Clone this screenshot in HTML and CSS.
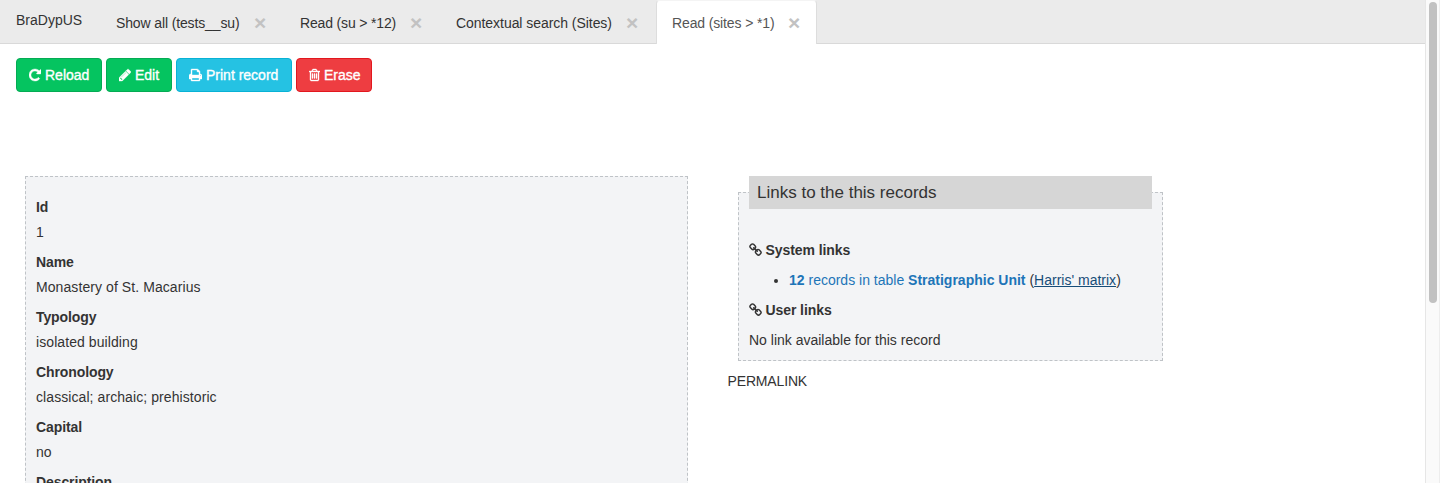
FILE: index.html
```
<!DOCTYPE html>
<html lang="en">
<head>
<meta charset="utf-8">
<title>BraDypUS</title>
<link rel="stylesheet" href="styles.css">
</head>
<body>
<svg class="defs" width="0" height="0">
  <symbol id="link" viewBox="64 0 1664 1792"><path d="M1520 1216q0-40-28-68l-208-208q-28-28-68-28-42 0-72 32 3 3 19 18.500t21.500 21.500 15 19 13 25.500 3.500 27.500q0 40-28 68t-68 28q-15 0-27.500-3.500t-25.500-13-19-15-21.500-21.500-18.500-19q-33 31-33 73 0 40 28 68l206 207q27 27 68 27 40 0 68-26l147-146q28-28 28-67zm-703-705q0-40-28-68l-206-207q-28-28-68-28-39 0-68 27l-147 146q-28 28-28 67 0 40 28 68l208 208q27 27 68 27 42 0 72-31-3-3-19-18.500t-21.500-21.500-15-19-13-25.500-3.500-27.500q0-40 28-68t68-28q15 0 27.500 3.500t25.500 13 19 15 21.500 21.500 18.500 19q33-31 33-73zm895 705q0 120-85 203l-147 146q-83 83-203 83-121 0-204-85l-206-207q-83-83-83-203 0-123 88-209l-88-88q-86 88-208 88-120 0-204-84l-208-208q-84-84-84-204t85-203l147-146q83-83 203-83 121 0 204 85l206 207q83 83 83 203 0 123-88 209l88 88q86-88 208-88 120 0 204 84l208 208q84 84 84 204z"/></symbol>
</svg>
<div class="app">
  <div class="view">
    <nav class="tabs">
      <span class="brand">BraDypUS</span>
      <span class="tab tab-all"><span class="t-all">Show all (tests__su)</span><b class="close">×</b></span>
      <span class="tab tab-su"><span class="t-su">Read (su &gt; *12)</span><b class="close">×</b></span>
      <span class="tab tab-search"><span class="t-search">Contextual search (Sites)</span><b class="close">×</b></span>
      <span class="tab active"><span class="t-sites">Read (sites &gt; *1)</span><b class="close">×</b></span>
    </nav>
    <div class="toolbar">
      <button class="btn green reload"><svg width="12" height="14" viewBox="128 0 1536 1792"><path d="M1664 256v448q0 26-19 45t-45 19h-448q-42 0-59-40-17-39 14-69l138-138q-148-137-349-137-104 0-198.500 40.500t-163.500 109.500-109.500 163.500-40.500 198.500 40.500 198.500 109.500 163.500 163.500 109.500 198.500 40.500q119 0 225-52t179-147q7-10 23-12 15 0 25 9l137 138q9 8 9.500 20.500t-7.500 22.500q-109 132-264 204.500t-327 72.500q-156 0-298-61t-245-164-164-245-61-298 61-298 164-245 245-164 298-61q147 0 284.500 55.500t244.500 156.500l130-129q29-31 70-14 39 17 39 59z"/></svg><span>Reload</span></button>
      <button class="btn green edit"><svg width="12" height="14" viewBox="128 0 1536 1792"><path d="M491 1536l91-91-235-235-91 91v107h128v128h107zm523-928q0-22-22-22-10 0-17 7l-542 542q-7 7-7 17 0 22 22 22 10 0 17-7l542-542q7-7 7-17zm-54-192l416 416-832 832h-416v-416zm683 96q0 53-37 90l-166 166-416-416 166-165q36-38 90-38 53 0 91 38l235 234q37 39 37 91z"/></svg><span>Edit</span></button>
      <button class="btn blue print"><svg width="13" height="14" viewBox="64 0 1664 1792"><path d="M448 1536h896v-256h-896v256zm0-640h896v-384h-160q-40 0-68-28t-28-68v-160h-640v640zm1152 64q0-26-19-45t-45-19-45 19-19 45 19 45 45 19 45-19 19-45zm128 0v416q0 13-9.500 22.500t-22.500 9.500h-224v160q0 40-28 68t-68 28h-960q-40 0-68-28t-28-68v-160h-224q-13 0-22.500-9.500t-9.500-22.500v-416q0-79 56.500-135.500t135.500-56.500h64v-544q0-40 28-68t68-28h672q40 0 88 20t76 48l152 152q28 28 48 76t20 88v256h64q79 0 135.500 56.500t56.500 135.500z"/></svg><span>Print record</span></button>
      <button class="btn red erase"><svg width="11" height="14" viewBox="192 0 1408 1792"><path d="M704 736v576q0 14-9 23t-23 9h-64q-14 0-23-9t-9-23v-576q0-14 9-23t23-9h64q14 0 23 9t9 23zm256 0v576q0 14-9 23t-23 9h-64q-14 0-23-9t-9-23v-576q0-14 9-23t23-9h64q14 0 23 9t9 23zm256 0v576q0 14-9 23t-23 9h-64q-14 0-23-9t-9-23v-576q0-14 9-23t23-9h64q14 0 23 9t9 23zm128 724v-948h-896v948q0 22 7 40.500t14.500 27 10.500 8.500h832q3 0 10.500-8.500t14.500-27 7-40.500zm-672-1076h448l-48-117q-7-9-17-11h-317q-10 2-17 11zm928 32v64q0 14-9 23t-23 9h-96v948q0 83-47 143.500t-113 60.500h-832q-66 0-113-58.500t-47-141.500v-952h-96q-14 0-23-9t-9-23v-64q0-14 9-23t23-9h309l70-167q15-37 54-63t79-26h320q40 0 79 26t54 63l70 167h309q14 0 23 9t9 23z"/></svg><span>Erase</span></button>
    </div>
    <main class="columns">
      <dl class="record">
        <dt>Id</dt><dd>1</dd>
        <dt>Name</dt><dd>Monastery of St. Macarius</dd>
        <dt>Typology</dt><dd>isolated building</dd>
        <dt>Chronology</dt><dd>classical; archaic; prehistoric</dd>
        <dt>Capital</dt><dd>no</dd>
        <dt>Description</dt>
      </dl>
      <aside class="side">
        <fieldset class="links">
          <legend>Links to the this records</legend>
          <p class="heading"><svg width="13" height="14"><use href="#link"/></svg><span>System links</span></p>
          <ul><li><a class="rec"><b>12</b> records in table <b>Stratigraphic Unit</b></a> (<a class="matrix">Harris' matrix</a>)</li></ul>
          <p class="heading"><svg width="13" height="14"><use href="#link"/></svg><span>User links</span></p>
          <p>No link available for this record</p>
        </fieldset>
        <div class="permalink">PERMALINK</div>
      </aside>
    </main>
  </div>
  <div class="scrollbar"><div class="thumb"></div></div>
</div>
</body>
</html>
```
FILE: styles.css
```
* { box-sizing: border-box; }
body { margin: 0; height: 483px; overflow: hidden; background: #fff; color: #333; font: 14px/20px "Liberation Sans", Arial, sans-serif; }
.defs { display: block; }
svg { fill: currentColor; flex: none; }
p, ul, dl, dd { margin: 0; }
.app { display: flex; height: 483px; overflow: hidden; }
.view { flex: 1; min-width: 0; }
.scrollbar { width: 15px; background: #fafafa; border-left: 1px solid #e6e6e6; border-right: 1px solid #ededed; padding: 2px 3px; }
.thumb { width: 8px; height: 301px; border-radius: 4px; background: #c1c1c1; }

.tabs { display: flex; height: 44px; background: #ebebeb; border-bottom: 1px solid #d9d9d9; white-space: nowrap; }
.brand { width: 100px; padding: 10px 0 0 16px; }
.tab { display: flex; height: 44px; padding: 13px 0 0 16px; }
.tab > span { flex: none; }
.tab-all { width: 184px; }
.tab-su { width: 156px; }
.tab-search { width: 216px; }
.active { width: 161px; padding: 12px 0 0 15px; background: #fff; color: #555; border: 1px solid #ddd; border-top-color: #f4f4f4; border-bottom: 0; border-radius: 4px 4px 0 0; }
.t-all { width: 138px; letter-spacing: -.13px; }
.t-su { width: 110px; letter-spacing: -.16px; }
.t-search { width: 170px; letter-spacing: -.05px; }
.t-sites { width: 116px; letter-spacing: -.13px; }
.close { font-size: 21px; line-height: 20px; color: #c2c2c2; }

.toolbar { display: flex; gap: 4px; padding: 14px 16px 0; }
.btn { display: flex; align-items: center; gap: 4px; height: 34px; padding: 0 12px; border: 1px solid; border-radius: 4px; color: #fff; font: inherit; white-space: nowrap; -webkit-text-stroke: .35px #fff; }
.btn svg { stroke: #fff; stroke-width: 50px; }
.green { background: #05c460; border-color: #04ab54; }
.blue { background: #25c2e3; border-color: #08b2d5; }
.red { background: #ee3d41; border-color: #e2171e; }
.reload { width: 86px; }
.edit { width: 66px; }
.print { width: 116px; }
.erase { width: 76px; }

.columns { display: flex; align-items: flex-start; gap: 40px; padding: 84px 0 0 25px; }
.record { width: 663px; height: 330px; padding: 20px 10px; background: #f3f4f6; border: 1px dashed #bfc3c7; }
dt { font-weight: bold; margin-bottom: 5px; letter-spacing: -.1px; }
dd { margin-bottom: 10px; letter-spacing: .08px; }
.side { width: 435px; }
.links { height: 185px; margin: 0 0 0 10px; padding: 31px 10px 0; background: #f3f4f6; border: 1px dashed #bfc3c7; min-width: 0; }
legend { width: 403px; height: 33px; padding: 0 8px; background: #d6d6d6; font-size: 17px; line-height: 33px; }
.links p, .links ul { margin-bottom: 10px; }
.links ul { padding-left: 40px; white-space: nowrap; }
.heading { display: flex; align-items: center; gap: 3.5px; font-weight: bold; letter-spacing: -.08px; }
.rec { color: #1d75b8; }
.matrix { color: #174d79; text-decoration: underline; }
.permalink { margin: 10px 0 0 -.5px; letter-spacing: -.15px; }
```
